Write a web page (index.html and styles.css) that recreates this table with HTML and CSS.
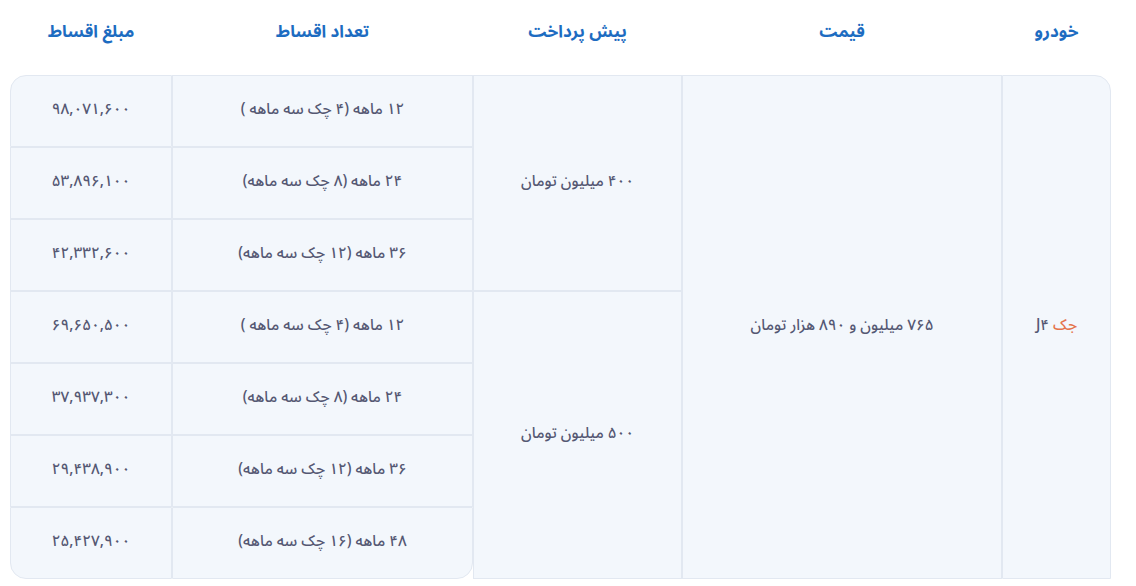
FILE: index.html
```html
<!DOCTYPE html>
<html lang="fa" dir="rtl">
<head>
<meta charset="utf-8">
<title>اقساط جک J4</title>
<link rel="stylesheet" href="styles.css">
</head>
<body>
<div class="page">
  <div class="head">
    <div class="th">خودرو</div>
    <div class="th">قیمت</div>
    <div class="th">پیش پرداخت</div>
    <div class="th">تعداد اقساط</div>
    <div class="th">مبلغ اقساط</div>
  </div>
  <div class="grid">
    <div class="cell car"><span class="brand">جک</span>&nbsp;J۴</div>
    <div class="cell price">۷۶۵ میلیون و ۸۹۰ هزار تومان</div>
    <div class="cell down down1">۴۰۰ میلیون تومان</div>
    <div class="cell down down2">۵۰۰ میلیون تومان</div>

    <div class="cell term">۱۲ ماهه (۴ چک سه ماهه )</div>
    <div class="cell amount tl">۹۸,۰۷۱,۶۰۰</div>
    <div class="cell term">۲۴ ماهه (۸ چک سه ماهه)</div>
    <div class="cell amount">۵۳,۸۹۶,۱۰۰</div>
    <div class="cell term">۳۶ ماهه (۱۲ چک سه ماهه)</div>
    <div class="cell amount">۴۲,۳۳۲,۶۰۰</div>
    <div class="cell term">۱۲ ماهه (۴ چک سه ماهه )</div>
    <div class="cell amount">۶۹,۶۵۰,۵۰۰</div>
    <div class="cell term">۲۴ ماهه (۸ چک سه ماهه)</div>
    <div class="cell amount">۳۷,۹۳۷,۳۰۰</div>
    <div class="cell term">۳۶ ماهه (۱۲ چک سه ماهه)</div>
    <div class="cell amount">۲۹,۴۳۸,۹۰۰</div>
    <div class="cell term br">۴۸ ماهه (۱۶ چک سه ماهه)</div>
    <div class="cell amount bl">۲۵,۴۲۷,۹۰۰</div>
  </div>
</div>
</body>
</html>
```
FILE: styles.css
```css
html, body {
  margin: 0;
  padding: 0;
  background: #ffffff;
}
body {
  font-family: "Noto Sans Arabic", "DejaVu Sans", sans-serif;
  color: #555873;
}
.page {
  width: 1101px;
  padding: 0 25px 0 10px;
}
.head,
.grid {
  display: grid;
  grid-template-columns: 109px 320px 209px 301px 162px;
}
.head {
  height: 75px;
}
.th {
  display: flex;
  align-items: center;
  justify-content: center;
  padding-bottom: 12px;
  font-size: 17px;
  font-weight: bold;
  color: #1d6cc1;
}
.grid {
  grid-template-rows: repeat(7, 72px);
}
.cell {
  box-sizing: border-box;
  display: flex;
  align-items: center;
  justify-content: center;
  padding-bottom: 5px;
  background: #f3f7fc;
  border: 1px solid #e2e8f1;
  font-size: 15.3px;
  font-weight: 500;
  white-space: nowrap;
}
.car {
  grid-column: 1;
  grid-row: 1 / 8;
  border-top-right-radius: 16px;
}
.brand {
  color: #e5744c;
}
.price {
  grid-column: 2;
  grid-row: 1 / 8;
}
.down {
  grid-column: 3;
}
.down1 {
  grid-row: 1 / 4;
}
.down2 {
  grid-row: 4 / 8;
}
.term {
  grid-column: 4;
}
.amount {
  grid-column: 5;
}
.tl {
  border-top-left-radius: 16px;
}
.bl {
  border-bottom-left-radius: 16px;
}
.br {
  border-bottom-right-radius: 16px;
}
```
